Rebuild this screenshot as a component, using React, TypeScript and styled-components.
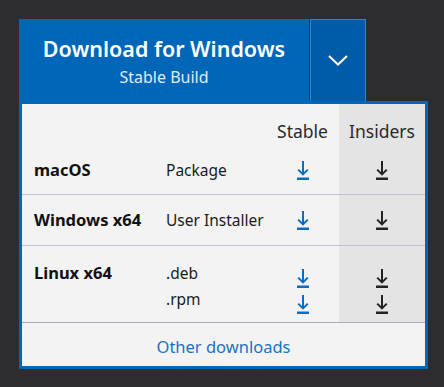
import styled, { createGlobalStyle } from "styled-components";

const Global = createGlobalStyle`
  html, body {
    margin: 0;
    padding: 0;
    background: #2c2c31;
  }
  body {
    font-family: "Segoe UI", "Noto Sans", sans-serif;
  }
`;

const rows = [
  { os: "macOS", kinds: ["Package"] },
  { os: "Windows x64", kinds: ["User Installer"] },
  { os: "Linux x64", kinds: [".deb", ".rpm"] },
];

function DownloadIcon({ color }: { color: string }) {
  return (
    <svg width="12" height="19" viewBox="0 0 12 19">
      <path
        d="M6 0 V13.5 M1.2 8.6 L6 13.4 L10.8 8.6"
        stroke={color}
        strokeWidth="2"
        fill="none"
      />
      <rect x="0" y="16.5" width="12" height="2.5" fill={color} />
    </svg>
  );
}

export default function App() {
  return (
    <>
      <Global />
      <Page>
        <Top>
          <MainButton>
            <Title>Download for Windows</Title>
            <Sub>Stable Build</Sub>
          </MainButton>
          <DropButton>
            <svg width="20" height="11" viewBox="0 0 20 11">
              <path d="M1 1 L10 9.5 L19 1" stroke="#fff" strokeWidth="2" fill="none" />
            </svg>
          </DropButton>
        </Top>
        <Panel>
          <HeadRow>
            <Cell />
            <Cell />
            <HeadCell>Stable</HeadCell>
            <HeadCell $insiders>Insiders</HeadCell>
          </HeadRow>
          {rows.map((r, i) => (
            <Row key={r.os} $multi={r.kinds.length > 1} $h={[48, 50, 76][i]}>
              <Label>{r.os}</Label>
              <Kinds>
                {r.kinds.map((k) => (
                  <Line key={k}>{k}</Line>
                ))}
              </Kinds>
              <Icons>
                {r.kinds.map((k) => (
                  <IconLine key={k}>
                    <DownloadIcon color="#0a6ec0" />
                  </IconLine>
                ))}
              </Icons>
              <Icons $insiders>
                {r.kinds.map((k) => (
                  <IconLine key={k}>
                    <DownloadIcon color="#222" />
                  </IconLine>
                ))}
              </Icons>
            </Row>
          ))}
          <Footer>Other downloads</Footer>
        </Panel>
      </Page>
    </>
  );
}

const Page = styled.div`
  padding: 19px 0 0 19px;
  width: 409px;
`;

const Top = styled.div`
  display: flex;
  align-items: stretch;
  height: 82px;
`;

const MainButton = styled.div`
  width: 290px;
  background: #0066b8;
  color: #fff;
  display: flex;
  flex-direction: column;
  align-items: center;
  justify-content: center;
  padding-top: 2px;
  box-sizing: border-box;
`;

const Title = styled.div`
  font-size: 21.5px;
  font-weight: 600;
  line-height: 30px;
`;

const Sub = styled.div`
  margin-top: 2px;
  font-size: 16px;
  line-height: 22px;
  color: #e2ecf7;
`;

const DropButton = styled.div`
  margin-left: 1px;
  width: 56px;
  box-sizing: border-box;
  background: #005ca6;
  border: 1px solid #3d7fcd;
  border-bottom: none;
  display: flex;
  align-items: center;
  justify-content: center;
`;

const Panel = styled.div`
  border: 3px solid #0066b8;
  background: #f3f3f3;
  color: #1b1b1b;
`;

const grid = `
  display: grid;
  grid-template-columns: 144px 100px 73px 86px;
`;

const HeadRow = styled.div`
  ${grid}
  height: 42px;
`;

const Cell = styled.div``;

const HeadCell = styled.div<{ $insiders?: boolean }>`
  background: ${(p) => (p.$insiders ? "#e4e4e4" : "transparent")};
  display: flex;
  align-items: flex-end;
  justify-content: center;
  padding-bottom: 3px;
  font-size: 17.5px;
  line-height: 24px;
  color: #2a2a2a;
`;

const Row = styled.div<{ $multi?: boolean; $h: number }>`
  ${grid}
  border-bottom: 1px solid ${(p) => (p.$multi ? "#aba8c6" : "#c4c1da")};
  height: ${(p) => p.$h}px;
  font-size: 15.5px;
  align-items: ${(p) => (p.$multi ? "start" : "center")};
  & > * {
    padding-top: ${(p) => (p.$multi ? "14px" : "0")};
  }
`;

const Label = styled.div`
  padding-left: 12px;
  font-weight: 700;
  font-size: 16.5px;
  line-height: 26px;
  color: #111;
`;

const Kinds = styled.div`
  display: flex;
  flex-direction: column;
`;

const Line = styled.div`
  height: 26px;
  display: flex;
  align-items: center;
`;

const Icons = styled.div<{ $insiders?: boolean }>`
  align-self: stretch;
  display: flex;
  flex-direction: column;
  justify-content: center;
  background: ${(p) => (p.$insiders ? "#e4e4e4" : "transparent")};
`;

const IconLine = styled.div`
  height: 26px;
  display: flex;
  align-items: center;
  justify-content: center;
  padding-top: 1px;
  box-sizing: border-box;
`;

const Footer = styled.div`
  height: 43px;
  display: flex;
  align-items: center;
  justify-content: center;
  padding-top: 3px;
  box-sizing: border-box;
  color: #1a72c1;
  font-size: 16.5px;
`;
